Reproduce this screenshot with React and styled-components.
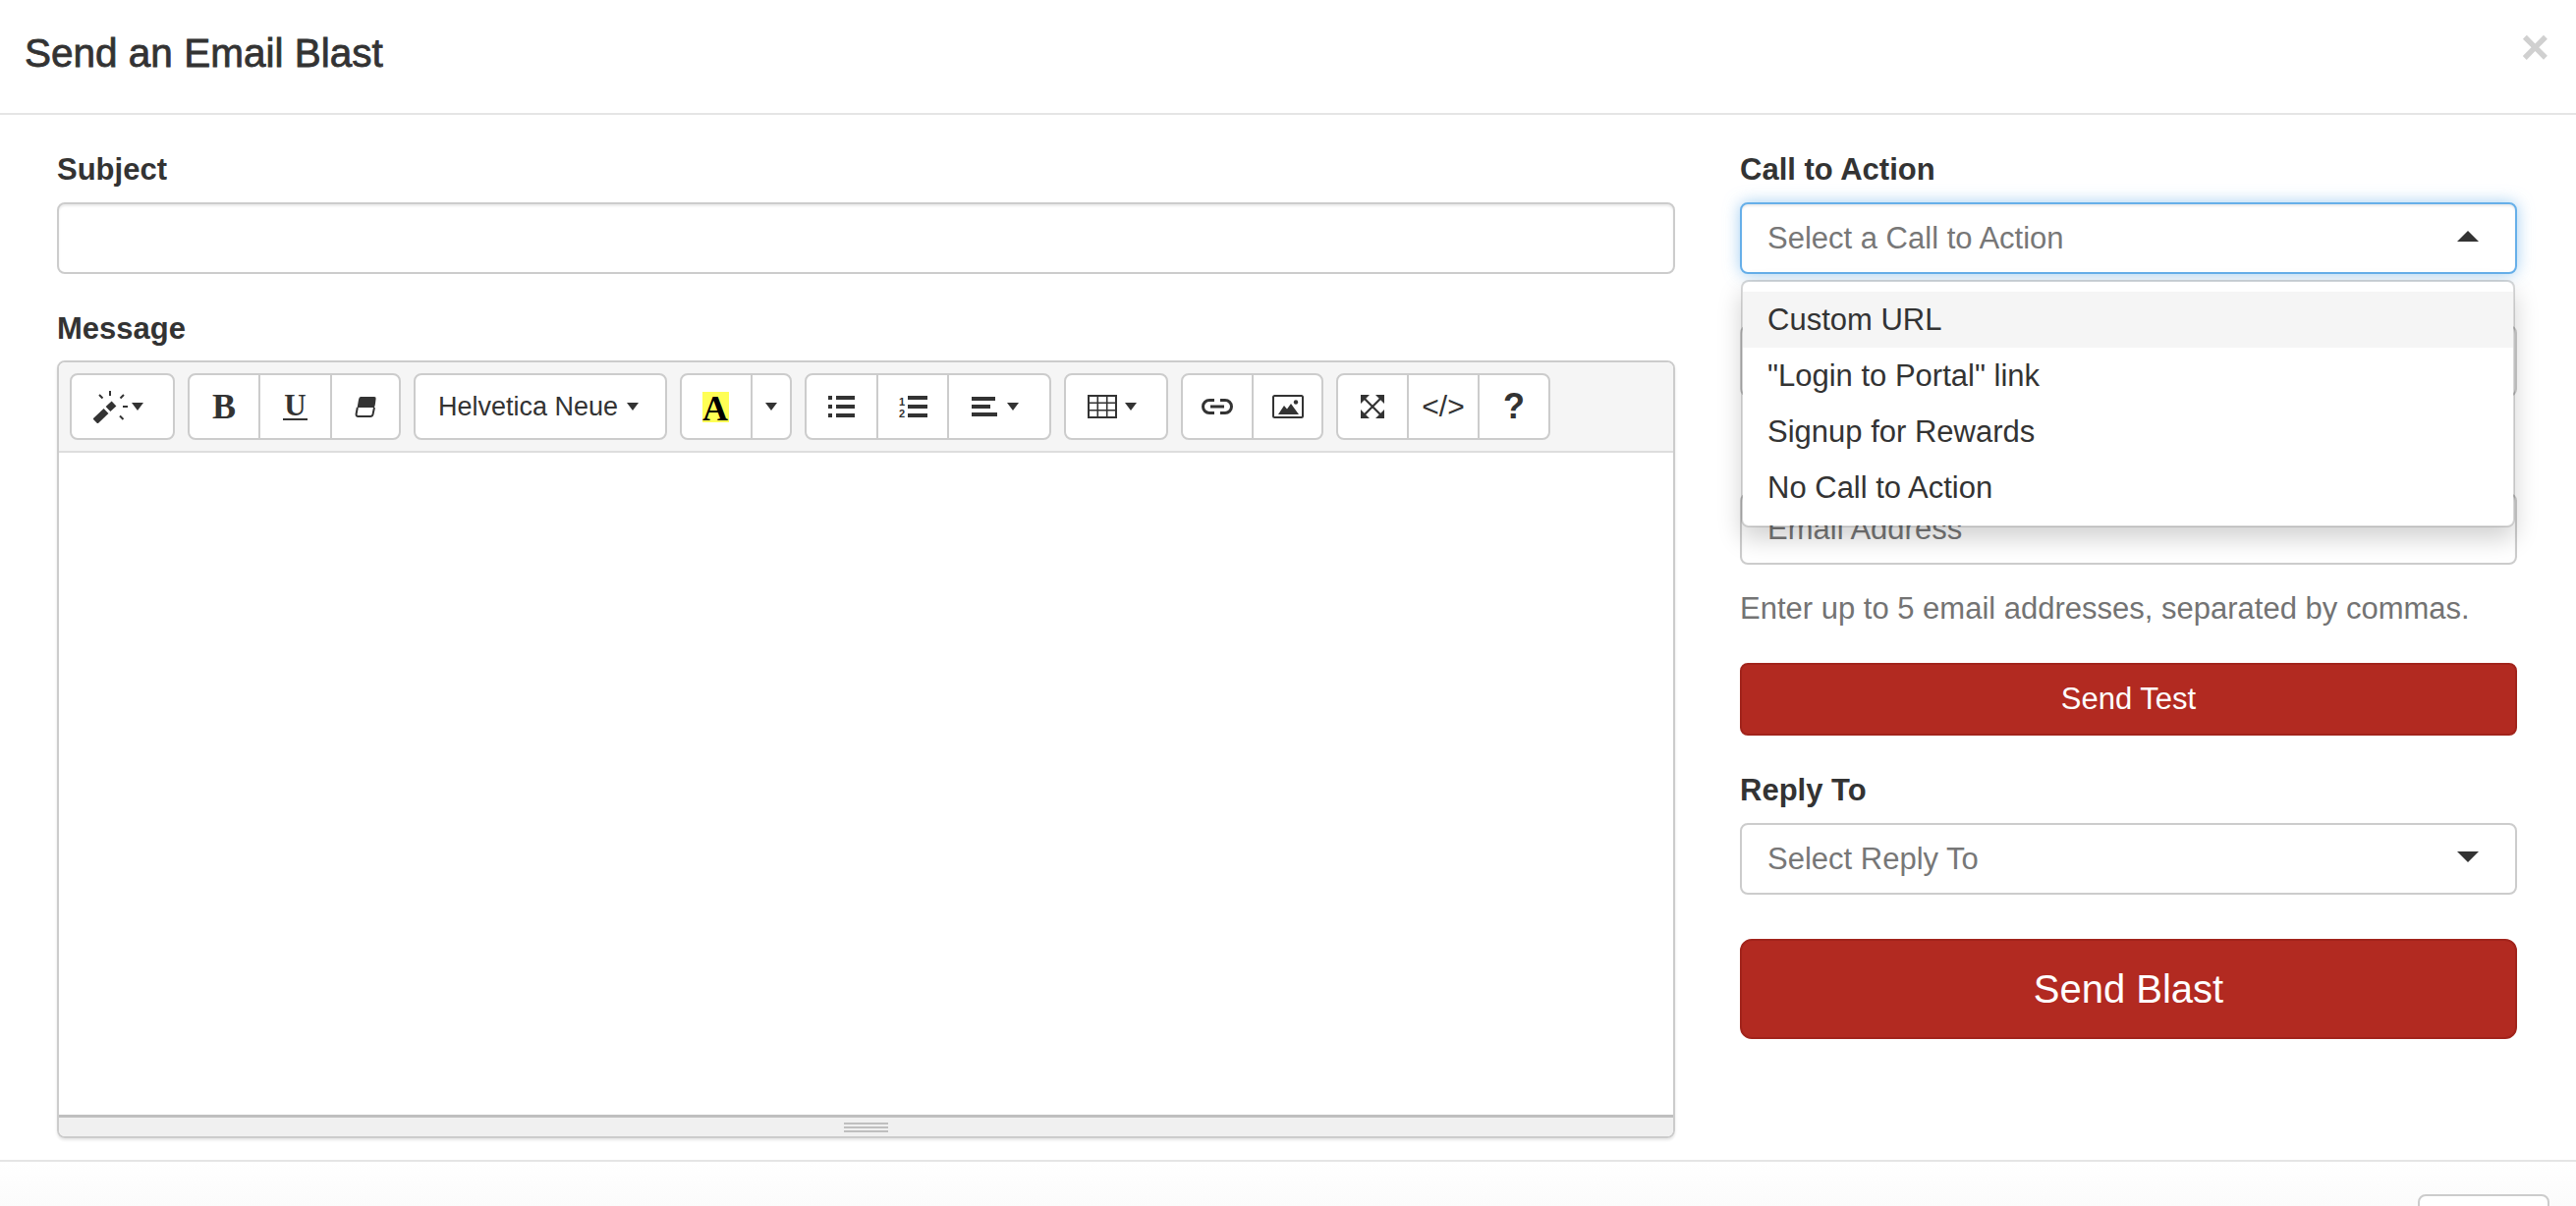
import styled, { createGlobalStyle } from 'styled-components';

const GlobalStyle = createGlobalStyle`
    html, body {
        margin: 0;
        padding: 0;
        background: #FFFFFF;
    }

    * {
        box-sizing: border-box;
    }
`;

const options = ['Custom URL', '"Login to Portal" link', 'Signup for Rewards', 'No Call to Action'];

export default function App() {
    return (
        <Page>
            <GlobalStyle />
            <Header>
                <Title>Send an Email Blast</Title>
                <CloseX>×</CloseX>
            </Header>
            <Body>
                <LeftColumn>
                    <Label>Subject</Label>
                    <TextInput />
                    <Label $top={36} $bottom={12}>Message</Label>
                    <Editor />
                </LeftColumn>
                <RightColumn>
                    <Label>Call to Action</Label>
                    <SelectWrap>
                        <SelectBox $focused>
                            <span>Select a Call to Action</span>
                            <SelectCaret $up />
                        </SelectBox>
                        <Menu>
                            {options.map((o, i) => <MenuItem key={o} $active={i === 0}>{o}</MenuItem>)}
                        </Menu>
                    </SelectWrap>
                    <TextInput $top={52} />
                    <TextInput $top={98}>Email Address</TextInput>
                    <Help>Enter up to 5 email addresses, separated by commas.</Help>
                    <RedButton>Send Test</RedButton>
                    <Label $top={36}>Reply To</Label>
                    <SelectBox>
                        <span>Select Reply To</span>
                        <SelectCaret />
                    </SelectBox>
                    <BigRedButton>Send Blast</BigRedButton>
                </RightColumn>
            </Body>
            <Footer>
                <CloseButton />
            </Footer>
        </Page>
    );
}

function Editor() {
    return (
        <EditorBox>
            <Toolbar>
                <Group>
                    <ToolButton $w={103} $pr={8}>
                        <WandIcon />
                        <Caret />
                    </ToolButton>
                </Group>
                <Group>
                    <ToolButton $w={70}><Bold>B</Bold></ToolButton>
                    <ToolButton $w={73}><Under>U</Under></ToolButton>
                    <ToolButton $w={70}><EraserIcon /></ToolButton>
                </Group>
                <Group>
                    <ToolButton $w={254} $gap={9} $pr={4}>
                        <FontName>Helvetica Neue</FontName>
                        <Caret />
                    </ToolButton>
                </Group>
                <Group>
                    <ToolButton $w={70} $pr={2}><Highlight>A</Highlight></ToolButton>
                    <ToolButton $w={40}><Caret /></ToolButton>
                </Group>
                <Group>
                    <ToolButton $w={71}><BulletIcon /></ToolButton>
                    <ToolButton $w={72}><NumberIcon /></ToolButton>
                    <ToolButton $w={104} $gap={10} $pr={8}>
                        <AlignIcon />
                        <Caret />
                    </ToolButton>
                </Group>
                <Group>
                    <ToolButton $w={102} $gap={8} $pr={8}>
                        <TableIcon />
                        <Caret />
                    </ToolButton>
                </Group>
                <Group>
                    <ToolButton $w={70}><LinkIcon /></ToolButton>
                    <ToolButton $w={71}><PictureIcon /></ToolButton>
                </Group>
                <Group>
                    <ToolButton $w={70}><ExpandIcon /></ToolButton>
                    <ToolButton $w={72}><CodeText>&lt;/&gt;</CodeText></ToolButton>
                    <ToolButton $w={72}><Question>?</Question></ToolButton>
                </Group>
            </Toolbar>
            <EditArea />
            <ResizeBar>
                <Grip />
            </ResizeBar>
        </EditorBox>
    );
}

function WandIcon() {
    return (
        <svg width="36" height="34" viewBox="0 0 36 34" fill="none" stroke="#333">
            <path d="M2 32 L13 21.5" strokeWidth="7" />
            <path d="M15 19.5 L21 14" strokeWidth="7" />
            <path d="M17 1 V6 M6 5 L9.5 8.5 M31 5 L27.5 8.5 M30 17 H35 M27 26.5 L30.5 30" strokeWidth="2" />
        </svg>
    );
}

function EraserIcon() {
    return (
        <svg width="22" height="22" viewBox="0 0 22 22">
            <path d="M6 1 H20 Q22 1 21.6 3 L21 8 Q20.8 9.5 20 12 H2.6 L4 4 Q4.500 1 6 1 Z" fill="#333" />
            <path d="M2.8 12 L1.6 18.500 Q1.400 21 3.500 21 H16 Q18 21 18.500 19 L20 12" fill="none" stroke="#333" strokeWidth="2" />
        </svg>
    );
}

function BulletIcon() {
    return (
        <svg width="28" height="22" viewBox="0 0 28 22" fill="#333">
            <path d="M0 0 H4 V4 H0 Z M0 9 H4 V13 H0 Z M0 18 H4 V22 H0 Z" />
            <path d="M8 0 H27 V4 H8 Z M8 9 H27 V13 H8 Z M8 18 H27 V22 H8 Z" />
        </svg>
    );
}

function NumberIcon() {
    return (
        <svg width="29" height="23" viewBox="0 0 29 23" fill="#333">
            <text x="0" y="10" fontFamily="'Liberation Sans', sans-serif" fontWeight="700" fontSize="11">1</text>
            <text x="0" y="22" fontFamily="'Liberation Sans', sans-serif" fontWeight="700" fontSize="11">2</text>
            <path d="M9 0 H29 V4 H9 Z M9 9 H29 V13 H9 Z M9 18 H29 V22 H9 Z" />
        </svg>
    );
}

function AlignIcon() {
    return (
        <svg width="26" height="20" viewBox="0 0 26 20" fill="#333">
            <path d="M0 0 H24 V4 H0 Z M0 8 H19 V12 H0 Z M0 16 H26 V20 H0 Z" />
        </svg>
    );
}

function TableIcon() {
    return (
        <svg width="30" height="24" viewBox="0 0 30 24" fill="none" stroke="#333" strokeWidth="2">
            <path d="M1 1 H29 V23 H1 Z" />
            <path d="M1 8.300 H29 M1 15.700 H29 M10.300 1 V23 M19.700 1 V23" strokeWidth="1.600" />
        </svg>
    );
}

function LinkIcon() {
    return (
        <svg width="32" height="16" viewBox="0 0 32 16" fill="none" stroke="#333" strokeWidth="3">
            <path d="M13 1.500 H8 A6.500 6.500 0 0 0 8 14.500 H13" />
            <path d="M19 1.500 H24 A6.500 6.500 0 0 1 24 14.500 H19" />
            <path d="M9 8 H23" />
        </svg>
    );
}

function PictureIcon() {
    return (
        <svg width="32" height="24" viewBox="0 0 32 24">
            <rect x="1" y="1" width="30" height="22" rx="1.500" fill="none" stroke="#333" strokeWidth="2" />
            <circle cx="24" cy="7.500" r="2.200" fill="#333" />
            <path d="M6 20 L12 11 L15 14.500 L19 9 L27 20 Z" fill="#333" />
        </svg>
    );
}

function ExpandIcon() {
    return (
        <svg width="24" height="24" viewBox="0 0 24 24">
            <path d="M3 3 L21 21 M21 3 L3 21" stroke="#333" strokeWidth="2.200" />
            <path d="M0 0 H9 L0 9 Z M24 0 V9 L15 0 Z M0 24 V15 L9 24 Z M24 24 H15 L24 15 Z" fill="#333" />
        </svg>
    );
}

const Page = styled.div`
    width: 2622px;
    height: 1228px;
    overflow: hidden;
    background: #FFFFFF;
    color: #333333;
    font-family: "Liberation Sans", Arial, sans-serif;
    font-size: 31px;
    line-height: 40px;
`;

const Header = styled.div`
    height: 117px;
    padding: 0 25px;
    border-bottom: 2px solid #E5E5E5;
    display: flex;
    justify-content: space-between;
    align-items: flex-start;
`;

const Title = styled.h4`
    margin: 33px 0 0;
    font-size: 40.5px;
    font-weight: 500;
    line-height: 42px;
    -webkit-text-stroke: 0.8px #333333;
`;

const CloseX = styled.div`
    margin: 23px 2px 0 0;
    font-size: 50px;
    font-weight: 700;
    line-height: 50px;
    color: #D0D0D0;
`;

const Body = styled.div`
    height: 1066px;
    padding: 36px 60px 0 58px;
    border-bottom: 2px solid #E5E5E5;
    display: grid;
    grid-template-columns: 1647px 791px;
    column-gap: 66px;
    align-items: start;
`;

const LeftColumn = styled.div`
    display: flex;
    flex-direction: column;
`;

const RightColumn = styled.div`
    display: flex;
    flex-direction: column;
`;

const Label = styled.label`
    display: block;
    margin-top: ${props => props.$top || 0}px;
    margin-bottom: ${props => props.$bottom || 13}px;
    font-weight: 700;
    line-height: 40px;
`;

const TextInput = styled.div`
    height: 73px;
    margin-top: ${props => props.$top || 0}px;
    padding: 0 26px;
    background: #FFFFFF;
    border: 2px solid #CCCCCC;
    border-radius: 8px;
    box-shadow: inset 0 2px 2px rgba(0, 0, 0, 0.075);
    color: #777777;
    line-height: 69px;
`;

const SelectWrap = styled.div`
    position: relative;
`;

const SelectBox = styled.div`
    height: 73px;
    padding: 0 37px 0 26px;
    background: #FFFFFF;
    border: 2px solid ${props => props.$focused ? '#66AFE9' : '#CCCCCC'};
    border-radius: 8px;
    box-shadow: ${props => props.$focused ? 'inset 0 2px 2px rgba(0, 0, 0, 0.075), 0 0 16px rgba(102, 175, 233, 0.6)' : 'none'};
    color: #777777;
    display: flex;
    justify-content: space-between;
    align-items: center;
`;

const SelectCaret = styled.i`
    width: 0;
    height: 0;
    margin-top: -4px;
    border-left: 11px solid transparent;
    border-right: 11px solid transparent;
    border-top: ${props => props.$up ? '0' : '11px solid #333333'};
    border-bottom: ${props => props.$up ? '11px solid #333333' : '0'};
`;

const Menu = styled.div`
    width: 788px;
    height: 252px;
    padding: 10px 0;
    background: #FFFFFF;
    border: 2px solid rgba(0, 0, 0, 0.15);
    border-radius: 8px;
    box-shadow: 0 12px 24px rgba(0, 0, 0, 0.175);
    background-clip: padding-box;
    position: absolute;
    top: 79px;
    left: 1px;
    z-index: 2;
`;

const MenuItem = styled.div`
    height: 57px;
    padding: 0 25px;
    background: ${props => props.$active ? '#F5F5F5' : 'transparent'};
    color: #333333;
    line-height: 57px;
`;

const Help = styled.p`
    margin: 25px 0 0;
    color: #737373;
    line-height: 40px;
`;

const RedButton = styled.button`
    height: 74px;
    margin-top: 35px;
    background: #B22A21;
    border: 2px solid #A1231B;
    border-radius: 8px;
    color: #FFFFFF;
    font-family: inherit;
    font-size: 31px;
`;

const BigRedButton = styled(RedButton)`
    height: 102px;
    margin-top: 45px;
    border-radius: 12px;
    font-size: 40px;
`;

const Footer = styled.div`
    padding: 33px 27px 0 0;
    height: 300px;
    background: linear-gradient(#FFFFFF, #FBFBFB 45px);
    display: flex;
    justify-content: flex-end;
    align-items: flex-start;
`;

const CloseButton = styled.button`
    width: 134px;
    height: 74px;
    background: #FFFFFF;
    border: 2px solid #CCCCCC;
    border-radius: 8px;
`;

const EditorBox = styled.div`
    height: 792px;
    border: 2px solid #CCCCCC;
    border-radius: 8px;
    box-shadow: 0 2px 3px rgba(0, 0, 0, 0.1);
    overflow: hidden;
    display: flex;
    flex-direction: column;
`;

const Toolbar = styled.div`
    height: 92px;
    padding: 11px 0 0 11px;
    background: #F5F5F5;
    border-bottom: 2px solid #DDDDDD;
    display: flex;
    align-items: flex-start;
    gap: 13px;
`;

const Group = styled.div`
    height: 68px;
    background: #FFFFFF;
    border: 2px solid #CCCCCC;
    border-radius: 8px;
    display: flex;
`;

const ToolButton = styled.div`
    width: ${props => props.$w}px;
    padding-right: ${props => props.$pr || 0}px;
    color: #333333;
    display: flex;
    justify-content: center;
    align-items: center;
    gap: ${props => props.$gap || 3}px;

    & + & {
        border-left: 2px solid #CCCCCC;
    }
`;

const Caret = styled.i`
    width: 0;
    height: 0;
    border-left: 6px solid transparent;
    border-right: 6px solid transparent;
    border-top: 8px solid #333333;
`;

const Bold = styled.b`
    font-family: "Liberation Serif", serif;
    font-size: 36px;
    line-height: 36px;
`;

const Under = styled.b`
    font-family: "Liberation Serif", serif;
    font-size: 31px;
    line-height: 26px;
    padding: 0 1px;
    border-bottom: 2px solid #333333;
`;

const FontName = styled.span`
    font-size: 27px;
    line-height: 34px;
`;

const Highlight = styled.b`
    width: 27px;
    height: 31px;
    background: #FFFF55;
    color: #000000;
    font-family: "Liberation Serif", serif;
    font-size: 36px;
    line-height: 35px;
    text-align: center;
    display: flex;
    justify-content: center;
`;

const CodeText = styled.span`
    font-size: 30px;
    line-height: 30px;
`;

const Question = styled.b`
    font-size: 36px;
    line-height: 36px;
`;

const EditArea = styled.div`
    flex: 1;
    background: #FFFFFF;
`;

const ResizeBar = styled.div`
    height: 22px;
    background: #F0F0F0;
    border-top: 3px solid #BFBFBF;
    display: flex;
    justify-content: center;
    align-items: center;
`;

const Grip = styled.div`
    width: 45px;
    height: 10px;
    border-top: 2px solid #BFBFBF;
    border-bottom: 2px solid #BFBFBF;
    background: linear-gradient(#BFBFBF, #BFBFBF) center / 100% 2px no-repeat;
`;
